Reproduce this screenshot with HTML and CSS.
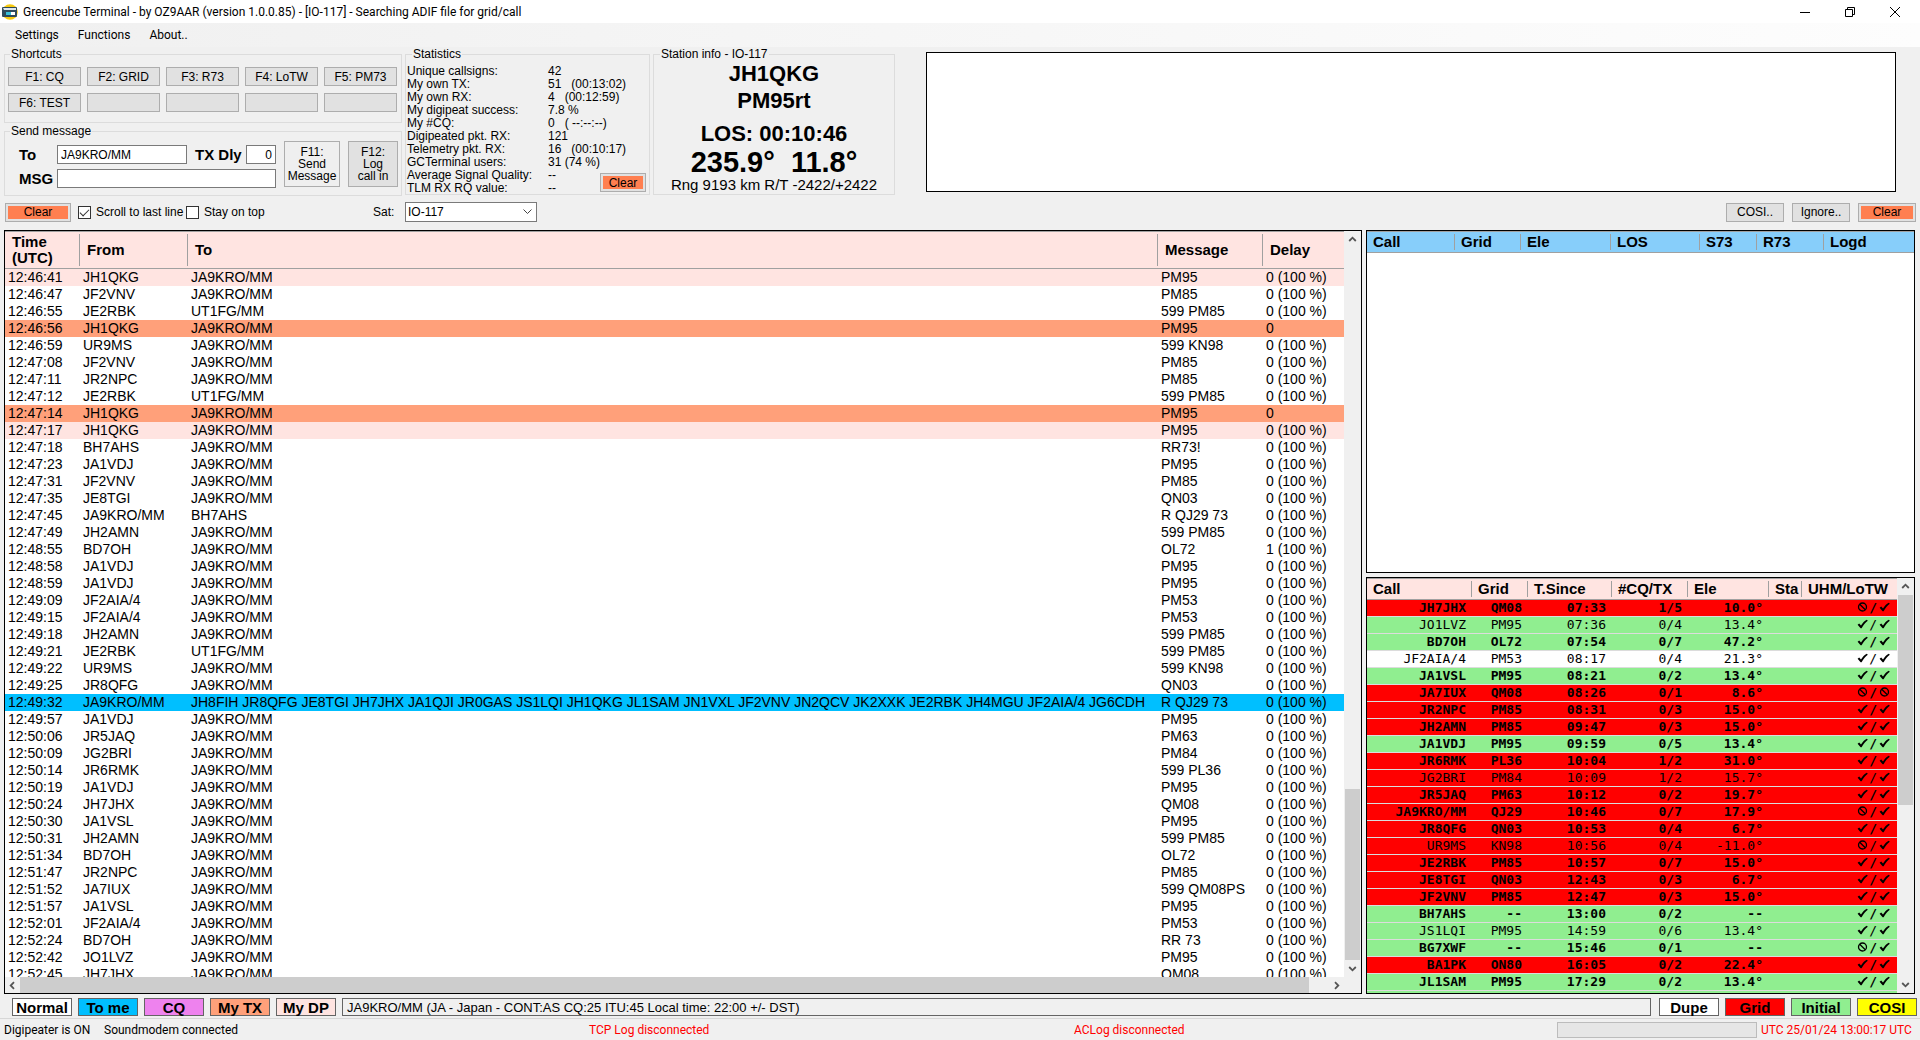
FILE: index.html
```html
<!DOCTYPE html>
<html lang="en">
<head>
<meta charset="utf-8">
<title>Greencube Terminal</title>
<link rel="stylesheet" href="styles.css">
</head>
<body>
<svg class="defs" aria-hidden="true">
<symbol id="yes" viewBox="0 0 11 10"><path d="M.6 5.8 2.2 4.6 4 6.400C5.600 4 7.500 2 9.800.8L10.800 1.800C8.300 3.600 6.400 6 4.600 9.200H3.600Z" fill="currentColor"/></symbol>
<symbol id="no" viewBox="0 0 11 10"><circle cx="5.5" cy="5" r="4" fill="none" stroke="currentColor" stroke-width="1.3"/><path d="M2.7 2.2 8.3 7.8" stroke="currentColor" stroke-width="1.3"/></symbol>
<symbol id="up" viewBox="0 0 9 9"><path d="M1.2 6 4.5 2.7 7.8 6" fill="none" stroke="#555" stroke-width="1.8"/></symbol>
</svg>
<header class="titlebar">
<svg class="logo" width="16" height="16" viewBox="0 0 16 16"><circle cx="8" cy="8" r="7.8" fill="#f6c90e"/><rect x="0" y="3" width="15" height="10" rx="1" fill="#2f4a5c"/><path d="M1 4h13v2H2z" fill="#dfe8ee"/><path d="M4 8h5v3H4z" fill="#38c0d8"/><path d="M9 8h4v3H9z" fill="#fff"/></svg>
<h1>Greencube Terminal - by OZ9AAR (version 1.0.0.85) - [IO-117] - Searching ADIF file for grid/call</h1>
<div class="wincontrols">
<button type="button" aria-label="Minimize"><svg width="10" height="10"><path d="M0 5.5h10" stroke="#000"/></svg></button>
<button type="button" aria-label="Restore"><svg width="10" height="10"><path d="M.5 2.5h7v7h-7zM2.500 2V.5h7v7H8" fill="none" stroke="#000"/></svg></button>
<button type="button" aria-label="Close"><svg width="10" height="10"><path d="M0 0 10 10M10 0 0 10" stroke="#000"/></svg></button>
</div>
</header>
<nav class="menu"><a href="#">Settings</a><a href="#">Functions</a><a href="#">About..</a></nav>

<section class="top">
<div class="left">
<fieldset class="shortcuts"><legend>Shortcuts</legend>
<div class="keys">
<button type="button">F1: CQ</button><button type="button">F2: GRID</button><button type="button">F3: R73</button><button type="button">F4: LoTW</button><button type="button">F5: PM73</button>
<button type="button">F6: TEST</button><button type="button" aria-label="F7"></button><button type="button" aria-label="F8"></button><button type="button" aria-label="F9"></button><button type="button" aria-label="F10"></button>
</div></fieldset>
<fieldset class="send"><legend>Send message</legend>
<div class="sendrow">
<div class="fields">
<label for="to">To</label><input id="to" value="JA9KRO/MM"><label for="dly" class="dly">TX Dly</label><input id="dly" class="num" value="0">
<label for="msg">MSG</label><input id="msg" class="wide">
</div>
<button type="button" class="f11">F11:<br>Send<br>Message</button>
<button type="button" class="f12">F12:<br>Log<br>call in</button>
</div></fieldset>
</div>
<fieldset class="stats"><legend>Statistics</legend>
<dl>
<dt>Unique callsigns:</dt><dd>42</dd>
<dt>My own TX:</dt><dd>51 &nbsp; (00:13:02)</dd>
<dt>My own RX:</dt><dd>4 &nbsp; (00:12:59)</dd>
<dt>My digipeat success:</dt><dd>7.8 %</dd>
<dt>My #CQ:</dt><dd>0 &nbsp; ( --:--:--)</dd>
<dt>Digipeated pkt. RX:</dt><dd>121</dd>
<dt>Telemetry pkt. RX:</dt><dd>16 &nbsp; (00:10:17)</dd>
<dt>GCTerminal users:</dt><dd>31 (74 %)</dd>
<dt>Average Signal Quality:</dt><dd>--</dd>
<dt>TLM RX RQ value:</dt><dd>--</dd>
</dl>
<button type="button" class="clear">Clear</button>
</fieldset>
<fieldset class="station"><legend>Station info - IO-117</legend>
<p class="big">JH1QKG</p><p class="big grid">PM95rt</p><p class="big">LOS: 00:10:46</p><p class="huge">235.9°  11.8°</p><p class="rng">Rng 9193 km R/T -2422/+2422</p>
</fieldset>
<div class="console"></div>
</section>

<section class="tools">
<button type="button" class="clear main">Clear</button>
<input type="checkbox" id="scroll" checked><label for="scroll">Scroll to last line</label>
<input type="checkbox" id="ontop"><label for="ontop" class="ontop">Stay on top</label>
<label for="sat" class="satlabel">Sat:</label>
<select id="sat"><option>IO-117</option></select>
<div class="right"><button type="button">COSI..</button><button type="button">Ignore..</button><button type="button" class="clear">Clear</button></div>
</section>

<main class="panes">
<section class="pane logpane">
<div class="clip">
<table class="log">
<colgroup><col class="c-time"><col class="c-from"><col><col class="c-msg"><col class="c-delay"></colgroup>
<thead><tr><th>Time<br>(UTC)<th>From<th>To<th>Message<th>Delay</thead>
<tbody>
<tr class="dp"><td>12:46:41<td>JH1QKG<td>JA9KRO/MM<td>PM95<td>0 (100 %)
<tr><td>12:46:47<td>JF2VNV<td>JA9KRO/MM<td>PM85<td>0 (100 %)
<tr><td>12:46:55<td>JE2RBK<td>UT1FG/MM<td>599 PM85<td>0 (100 %)
<tr class="tx"><td>12:46:56<td>JH1QKG<td>JA9KRO/MM<td>PM95<td>0
<tr><td>12:46:59<td>UR9MS<td>JA9KRO/MM<td>599 KN98<td>0 (100 %)
<tr><td>12:47:08<td>JF2VNV<td>JA9KRO/MM<td>PM85<td>0 (100 %)
<tr><td>12:47:11<td>JR2NPC<td>JA9KRO/MM<td>PM85<td>0 (100 %)
<tr><td>12:47:12<td>JE2RBK<td>UT1FG/MM<td>599 PM85<td>0 (100 %)
<tr class="tx"><td>12:47:14<td>JH1QKG<td>JA9KRO/MM<td>PM95<td>0
<tr class="dp"><td>12:47:17<td>JH1QKG<td>JA9KRO/MM<td>PM95<td>0 (100 %)
<tr><td>12:47:18<td>BH7AHS<td>JA9KRO/MM<td>RR73!<td>0 (100 %)
<tr><td>12:47:23<td>JA1VDJ<td>JA9KRO/MM<td>PM95<td>0 (100 %)
<tr><td>12:47:31<td>JF2VNV<td>JA9KRO/MM<td>PM85<td>0 (100 %)
<tr><td>12:47:35<td>JE8TGI<td>JA9KRO/MM<td>QN03<td>0 (100 %)
<tr><td>12:47:45<td>JA9KRO/MM<td>BH7AHS<td>R QJ29 73<td>0 (100 %)
<tr><td>12:47:49<td>JH2AMN<td>JA9KRO/MM<td>599 PM85<td>0 (100 %)
<tr><td>12:48:55<td>BD7OH<td>JA9KRO/MM<td>OL72<td>1 (100 %)
<tr><td>12:48:58<td>JA1VDJ<td>JA9KRO/MM<td>PM95<td>0 (100 %)
<tr><td>12:48:59<td>JA1VDJ<td>JA9KRO/MM<td>PM95<td>0 (100 %)
<tr><td>12:49:09<td>JF2AIA/4<td>JA9KRO/MM<td>PM53<td>0 (100 %)
<tr><td>12:49:15<td>JF2AIA/4<td>JA9KRO/MM<td>PM53<td>0 (100 %)
<tr><td>12:49:18<td>JH2AMN<td>JA9KRO/MM<td>599 PM85<td>0 (100 %)
<tr><td>12:49:21<td>JE2RBK<td>UT1FG/MM<td>599 PM85<td>0 (100 %)
<tr><td>12:49:22<td>UR9MS<td>JA9KRO/MM<td>599 KN98<td>0 (100 %)
<tr><td>12:49:25<td>JR8QFG<td>JA9KRO/MM<td>QN03<td>0 (100 %)
<tr class="me"><td>12:49:32<td>JA9KRO/MM<td>JH8FIH JR8QFG JE8TGI JH7JHX JA1QJI JR0GAS JS1LQI JH1QKG JL1SAM JN1VXL JF2VNV JN2QCV JK2XXK JE2RBK JH4MGU JF2AIA/4 JG6CDH<td>R QJ29 73<td>0 (100 %)
<tr><td>12:49:57<td>JA1VDJ<td>JA9KRO/MM<td>PM95<td>0 (100 %)
<tr><td>12:50:06<td>JR5JAQ<td>JA9KRO/MM<td>PM63<td>0 (100 %)
<tr><td>12:50:09<td>JG2BRI<td>JA9KRO/MM<td>PM84<td>0 (100 %)
<tr><td>12:50:14<td>JR6RMK<td>JA9KRO/MM<td>599 PL36<td>0 (100 %)
<tr><td>12:50:19<td>JA1VDJ<td>JA9KRO/MM<td>PM95<td>0 (100 %)
<tr><td>12:50:24<td>JH7JHX<td>JA9KRO/MM<td>QM08<td>0 (100 %)
<tr><td>12:50:30<td>JA1VSL<td>JA9KRO/MM<td>PM95<td>0 (100 %)
<tr><td>12:50:31<td>JH2AMN<td>JA9KRO/MM<td>599 PM85<td>0 (100 %)
<tr><td>12:51:34<td>BD7OH<td>JA9KRO/MM<td>OL72<td>0 (100 %)
<tr><td>12:51:47<td>JR2NPC<td>JA9KRO/MM<td>PM85<td>0 (100 %)
<tr><td>12:51:52<td>JA7IUX<td>JA9KRO/MM<td>599 QM08PS<td>0 (100 %)
<tr><td>12:51:57<td>JA1VSL<td>JA9KRO/MM<td>PM95<td>0 (100 %)
<tr><td>12:52:01<td>JF2AIA/4<td>JA9KRO/MM<td>PM53<td>0 (100 %)
<tr><td>12:52:24<td>BD7OH<td>JA9KRO/MM<td>RR 73<td>0 (100 %)
<tr><td>12:52:42<td>JO1LVZ<td>JA9KRO/MM<td>PM95<td>0 (100 %)
<tr><td>12:52:45<td>JH7JHX<td>JA9KRO/MM<td>QM08<td>0 (100 %)
</tbody></table>
</div>
<div class="vbar"><svg class="arrow"><use href="#up"/></svg><div class="track"><div class="thumb logthumb"></div></div><svg class="arrow down"><use href="#up"/></svg></div>
<div class="hbar"><svg class="arrow leftward"><use href="#up"/></svg><div class="thumb"></div><svg class="arrow rightward"><use href="#up"/></svg></div>
</section>
<div class="side">
<section class="pane queue">
<table class="grid-head blue">
<colgroup><col class="q1"><col class="q2"><col class="q3"><col class="q4"><col class="q5"><col class="q6"><col></colgroup>
<thead><tr><th>Call<th>Grid<th>Ele<th>LOS<th>S73<th>R73<th>Logd</thead></table>
</section>
<section class="pane heard">
<div class="clip">
<table class="grid-head calls">
<colgroup><col class="h1"><col class="h2"><col class="h3"><col class="h4"><col class="h5"><col class="h6"><col></colgroup>
<thead><tr><th>Call<th>Grid<th>T.Since<th>#CQ/TX<th>Ele<th>Sta<th>UHM/LoTW</thead>
<tbody>
<tr class="g b"><td>JH7JHX<td>QM08<td>07:33<td>1/5<td>10.0°<td><td><svg><use href="#no"/></svg>/<svg><use href="#yes"/></svg>
<tr class="i"><td>JO1LVZ<td>PM95<td>07:36<td>0/4<td>13.4°<td><td><svg><use href="#yes"/></svg>/<svg><use href="#yes"/></svg>
<tr class="i b"><td>BD7OH<td>OL72<td>07:54<td>0/7<td>47.2°<td><td><svg><use href="#yes"/></svg>/<svg><use href="#yes"/></svg>
<tr><td>JF2AIA/4<td>PM53<td>08:17<td>0/4<td>21.3°<td><td><svg><use href="#yes"/></svg>/<svg><use href="#yes"/></svg>
<tr class="i b"><td>JA1VSL<td>PM95<td>08:21<td>0/2<td>13.4°<td><td><svg><use href="#yes"/></svg>/<svg><use href="#yes"/></svg>
<tr class="g b"><td>JA7IUX<td>QM08<td>08:26<td>0/1<td>8.6°<td><td><svg><use href="#no"/></svg>/<svg><use href="#no"/></svg>
<tr class="g b"><td>JR2NPC<td>PM85<td>08:31<td>0/3<td>15.0°<td><td><svg><use href="#yes"/></svg>/<svg><use href="#yes"/></svg>
<tr class="g b"><td>JH2AMN<td>PM85<td>09:47<td>0/3<td>15.0°<td><td><svg><use href="#yes"/></svg>/<svg><use href="#yes"/></svg>
<tr class="i b"><td>JA1VDJ<td>PM95<td>09:59<td>0/5<td>13.4°<td><td><svg><use href="#yes"/></svg>/<svg><use href="#yes"/></svg>
<tr class="g b"><td>JR6RMK<td>PL36<td>10:04<td>1/2<td>31.0°<td><td><svg><use href="#yes"/></svg>/<svg><use href="#yes"/></svg>
<tr class="g"><td>JG2BRI<td>PM84<td>10:09<td>1/2<td>15.7°<td><td><svg><use href="#yes"/></svg>/<svg><use href="#yes"/></svg>
<tr class="g b"><td>JR5JAQ<td>PM63<td>10:12<td>0/2<td>19.7°<td><td><svg><use href="#yes"/></svg>/<svg><use href="#yes"/></svg>
<tr class="g b"><td>JA9KRO/MM<td>QJ29<td>10:46<td>0/7<td>17.9°<td><td><svg><use href="#no"/></svg>/<svg><use href="#yes"/></svg>
<tr class="g b"><td>JR8QFG<td>QN03<td>10:53<td>0/4<td>6.7°<td><td><svg><use href="#yes"/></svg>/<svg><use href="#yes"/></svg>
<tr class="g"><td>UR9MS<td>KN98<td>10:56<td>0/4<td>-11.0°<td><td><svg><use href="#no"/></svg>/<svg><use href="#yes"/></svg>
<tr class="g b"><td>JE2RBK<td>PM85<td>10:57<td>0/7<td>15.0°<td><td><svg><use href="#yes"/></svg>/<svg><use href="#yes"/></svg>
<tr class="g b"><td>JE8TGI<td>QN03<td>12:43<td>0/3<td>6.7°<td><td><svg><use href="#yes"/></svg>/<svg><use href="#yes"/></svg>
<tr class="g b"><td>JF2VNV<td>PM85<td>12:47<td>0/3<td>15.0°<td><td><svg><use href="#yes"/></svg>/<svg><use href="#yes"/></svg>
<tr class="i b"><td>BH7AHS<td>--<td>13:00<td>0/2<td>--<td><td><svg><use href="#yes"/></svg>/<svg><use href="#yes"/></svg>
<tr class="i"><td>JS1LQI<td>PM95<td>14:59<td>0/6<td>13.4°<td><td><svg><use href="#yes"/></svg>/<svg><use href="#yes"/></svg>
<tr class="i b"><td>BG7XWF<td>--<td>15:46<td>0/1<td>--<td><td><svg><use href="#no"/></svg>/<svg><use href="#yes"/></svg>
<tr class="g b"><td>BA1PK<td>ON80<td>16:05<td>0/2<td>22.4°<td><td><svg><use href="#yes"/></svg>/<svg><use href="#yes"/></svg>
<tr class="i b"><td>JL1SAM<td>PM95<td>17:29<td>0/2<td>13.4°<td><td><svg><use href="#yes"/></svg>/<svg><use href="#yes"/></svg>
<tr class="i"><td><td><td><td><td><td><td>
</tbody></table>
</div>
<div class="vbar"><svg class="arrow"><use href="#up"/></svg><div class="track"><div class="thumb heardthumb"></div></div><svg class="arrow down"><use href="#up"/></svg></div>
</section>
</div>
</main>

<section class="legendbar">
<span class="chip white">Normal</span><span class="chip sky">To me</span><span class="chip violet">CQ</span><span class="chip salmon">My TX</span><span class="chip rose">My DP</span>
<output class="info">JA9KRO/MM (JA - Japan - CONT:AS CQ:25 ITU:45 Local time: 22:00 +/- DST)</output>
<div class="chips"><span class="chip white">Dupe</span><span class="chip red">Grid</span><span class="chip green">Initial</span><span class="chip yellow">COSI</span></div>
</section>
<footer class="status">
<span class="st1">Digipeater is ON</span><span class="st2">Soundmodem connected</span><span class="alert st3">TCP Log disconnected</span><span class="alert st4">ACLog disconnected</span><span class="progress"></span><span class="alert utc">UTC 25/01/24 13:00:17 UTC</span>
</footer>
</body>
</html>
```
FILE: styles.css
```css
* { box-sizing: border-box; }
body { margin: 0; height: 100vh; min-height: 700px; display: flex; flex-direction: column; overflow: hidden; background: #f0f0f0; color: #000; font: 12px/12px "Liberation Sans", Arial, sans-serif; }
button, input, select { font: inherit; color: inherit; border-radius: 0; margin: 0; }
button { padding: 0; border: 1px solid #adadad; background: #e1e1e1; }
.defs { position: absolute; width: 0; height: 0; }

.titlebar { display: flex; align-items: center; height: 23px; flex: none; background: #fff; }
.logo { margin: 0 5px 0 2px; }
h1 { margin: 0; flex: 1; font: 12px/20px Roboto, "Noto Sans", sans-serif; }
.wincontrols { display: flex; padding-right: 3px; }
.wincontrols button { width: 45px; height: 20px; border: 0; background: none; display: grid; place-items: center; }
.menu { display: flex; align-items: center; gap: 19px; height: 24px; flex: none; padding-left: 15px; background: linear-gradient(90deg, #f0f0f0, #fdfdfd); font: 12px/20px Roboto, "Noto Sans", sans-serif; }
.menu a { color: inherit; text-decoration: none; }

.top { display: flex; gap: 3px; flex: none; height: 149px; padding: 1px 24px 0 4px; }
fieldset { margin: 0; padding: 0; border: 1px solid #dcdcdc; min-width: 0; }
legend { margin-left: 6px; padding: 0 1px; line-height: 12px; }
.left { width: 398px; display: flex; flex-direction: column; gap: 2px; }
.left legend { margin-left: 5px; }
.shortcuts { height: 75px; }
.keys { display: grid; grid-template-columns: repeat(5, 73px); grid-auto-rows: 19px; gap: 7px 6px; padding: 7px 3px 0; }
.send { height: 71px; }
.sendrow { display: flex; gap: 8px; padding: 4px 3px 0 14px; }
.fields { display: grid; grid-template-columns: 38px 130px 59px 30px; grid-template-rows: 19px 19px; row-gap: 5px; padding-top: 4px; }
.fields label { font-weight: bold; font-size: 15px; line-height: 19px; }
.fields .dly { padding-left: 8px; }
.fields input { border: 1px solid #7a7a7a; background: #fff; padding: 0 3px; width: 100%; min-width: 0; }
.fields .num { text-align: right; }
.fields .wide { grid-column: 2 / 5; }
.f11 { width: 56px; height: 46px; background: #efefef; }
.f12 { width: 50px; height: 46px; }
.clear { background: #ff7f50; box-shadow: inset 0 0 0 2px #e1e1e1; }
.stats { width: 245px; height: 147px; position: relative; padding-top: 5px; }
.stats dl { margin: 0; padding-left: 1px; display: grid; grid-template-columns: 141px 1fr; grid-auto-rows: 13px; line-height: 13px; }
.stats dt, .stats dd { margin: 0; white-space: nowrap; }
.stats .clear { position: absolute; right: 3px; bottom: 2px; width: 46px; height: 19px; }
.station { width: 242px; height: 147px; }
.station p { margin: 0; text-align: center; }
.station .big { font-weight: bold; font-size: 22px; line-height: 27px; }
.station .grid { padding-bottom: 6px; }
.station .huge { font-weight: bold; font-size: 29px; line-height: 30px; white-space: pre; }
.station .rng { font-size: 15px; line-height: 16px; }
.console { flex: 1; margin: 4px 0 4px 28px; border: 1px solid #000; background: #fff; }

.tools { display: flex; align-items: center; flex: none; height: 34px; padding: 0 4px 2px 5px; }
.tools .main { width: 66px; margin-right: 7px; }
.tools button { height: 19px; }
.tools label { white-space: nowrap; }
.tools label[for="scroll"] { width: 90px; }
.tools input { appearance: none; width: 13px; height: 13px; margin-right: 5px; border: 1px solid #333; background: #fff; display: grid; place-items: center; }
.tools input:checked::before { content: ""; width: 8px; height: 4px; margin-bottom: 2px; border: solid #333; border-width: 0 0 1px 1px; transform: rotate(-45deg); }
.tools .ontop { width: 169px; }
.tools .satlabel { width: 32px; }
select { width: 132px; height: 20px; padding: 0 2px; border: 1px solid #7a7a7a; appearance: none; background: #fff url("data:image/svg+xml,%3Csvg xmlns='http://www.w3.org/2000/svg' width='9' height='6'%3E%3Cpath d='M.5.5l4 4 4-4' fill='none' stroke='%23444'/%3E%3C/svg%3E") no-repeat right 4px center; }
.right { margin-left: auto; display: flex; gap: 8px; }
.right button { width: 58px; }

.panes { flex: 1; min-height: 0; display: grid; grid-template-columns: minmax(0, 1fr) 549px; gap: 4px; padding: 0 5px 0 4px; }
.pane { border: 1px solid #000; background: #fff; min-height: 0; overflow: hidden; }
.clip { overflow: hidden; min-height: 0; min-width: 0; }
.logpane { display: grid; grid-template: minmax(0, 1fr) 16px / minmax(0, 1fr) 17px; }
table { width: 100%; table-layout: fixed; border-collapse: collapse; }
th, td { padding: 0; text-align: left; white-space: nowrap; overflow: hidden; }
th { font-size: 15px; line-height: 16px; padding-left: 7px; background: linear-gradient(#a0a0a0, #a0a0a0) right center / 1px calc(100% - 4px) no-repeat #ffe4e1; border-top: 1px solid #a0a0a0; border-bottom: 1px solid #a0a0a0; }
th:last-child { background-size: 0 0; }
.log th { height: 37px; }
.log td { height: 17px; padding-left: 3px; font-size: 14px; line-height: 17px; }
.c-time { width: 75px; }
.c-from { width: 108px; }
.c-msg { width: 105px; }
.c-delay { width: 81px; }
.dp { background: #ffe4e1; }
.tx { background: #ffa07a; }
.me { background: #00bfff; }
.vbar { display: flex; flex-direction: column; width: 17px; background: #f0f0f0; padding: 0 1px; }
.track { flex: 1; min-height: 0; display: flex; flex-direction: column; }
.thumb { background: #cdcdcd; }
.logthumb { height: 24%; margin-top: auto; }
.heardthumb { height: 55%; }
.arrow { width: 9px; height: 9px; margin: 4px 3px; flex: none; }
.down { transform: rotate(180deg); }
.leftward { transform: rotate(-90deg); }
.rightward { transform: rotate(90deg); }
.hbar { grid-column: 1 / 3; display: flex; background: #f0f0f0; padding-right: 17px; }
.hbar .thumb { flex: 1; margin-right: 20px; }

.side { display: grid; grid-template-rows: 344fr 418fr; gap: 4px; min-height: 0; }
.grid-head th { height: 21px; padding-left: 6px; }
.blue th { background-color: #87cefa; }
.q1 { width: 88px; } .q2 { width: 66px; } .q3 { width: 90px; } .q4 { width: 89px; } .q5 { width: 57px; } .q6 { width: 67px; }
.heard { display: grid; grid-template-columns: minmax(0, 1fr) 17px; }
.h1 { width: 105px; } .h2 { width: 56px; } .h3 { width: 84px; } .h4 { width: 76px; } .h5 { width: 81px; } .h6 { width: 33px; }
.calls td { height: 17px; padding-right: 6px; text-align: right; font: 13px/16px "DejaVu Sans Mono", monospace; border-bottom: 1px solid #dcdcdc; }
.calls td:last-child { padding-right: 7px; }
.calls td svg { width: 11px; height: 10px; }
.calls td svg:first-child { margin-right: 1px; }
.calls td svg:last-child { margin-left: 2px; }
.calls .b td { font-weight: bold; }
.g { background: #f00; }
.i { background: #90ee90; }

.legendbar { display: flex; align-items: center; gap: 6px; flex: none; height: 24px; padding: 2px 3px 0 12px; }
.chip { width: 60px; height: 18px; border: 1px solid #646464; font-weight: bold; font-size: 15px; line-height: 17px; text-align: center; white-space: nowrap; }
.white { background: #fff; } .sky { background: #00bfff; } .violet { background: #ee82ee; } .salmon { background: #ffa07a; } .rose { background: #ffe4e1; }
.red { background: #f00; } .green { background: #90ee90; } .yellow { background: #ff0; }
.info { flex: 1; height: 18px; border: 1px solid #646464; padding-left: 4px; font-size: 13px; line-height: 17px; }
.chips { display: flex; gap: 6px; margin-left: 2px; }
.status { display: flex; align-items: center; flex: none; height: 22px; padding-left: 4px; border-top: 1px solid #d7d7d7; font: 12px/18px Roboto, "Noto Sans", sans-serif; white-space: nowrap; }
.st1 { width: 100px; }
.st2 { flex: 485 1 0; }
.st3 { flex: 485 1 0; }
.st4 { flex: 483 1 0; }
.alert { color: #f00; }
.progress { width: 200px; height: 16px; border: 1px solid #bcbcbc; background: #e6e6e6; margin-right: 4px; }
.utc { width: 159px; }
```
